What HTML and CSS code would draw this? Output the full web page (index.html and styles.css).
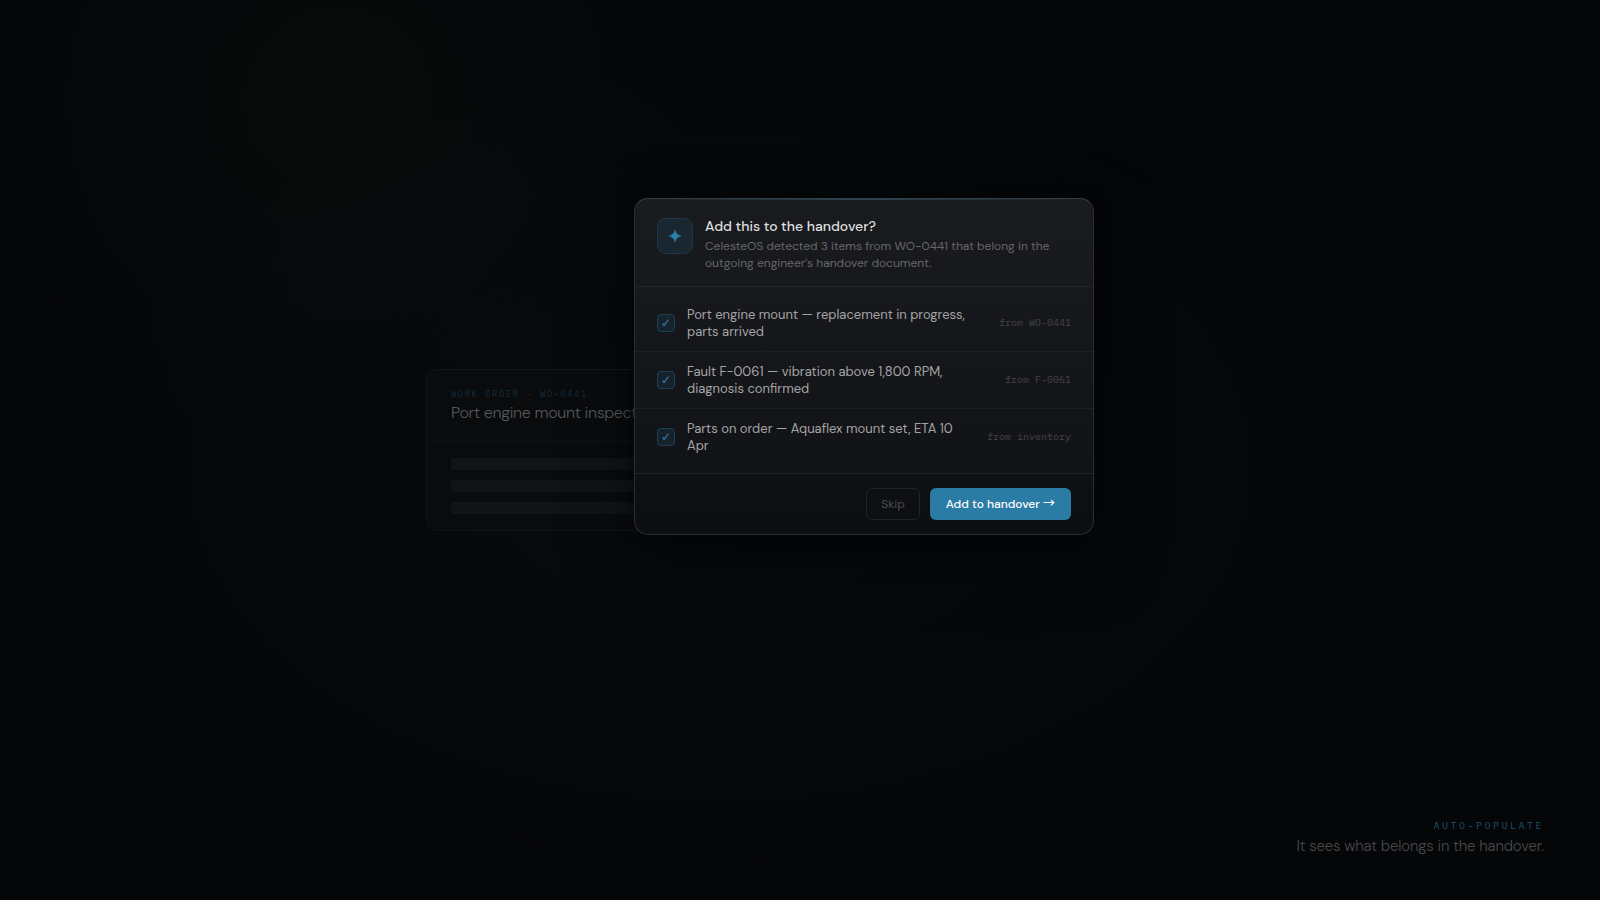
FILE: index.html
```
<!DOCTYPE html>
<html lang="en">
<head>
    <meta charset="UTF-8">
    <meta name="viewport" content="width=device-width, initial-scale=1.0">
    <title>Add to handover</title>
    <link rel="stylesheet" href="styles.css">
</head>
<body>
    <main class="stage">
        <div class="scene">
            <article class="card">
                <header class="card-header">
                    <p class="card-label">WORK ORDER · WO-0441</p>
                    <h1 class="card-title">Port engine mount inspection</h1>
                </header>
                <div class="card-body">
                    <div class="bar"></div>
                    <div class="bar"></div>
                    <div class="bar"></div>
                </div>
            </article>

            <form class="modal" role="dialog" aria-labelledby="modalTitle">
                <header class="modal-header">
                    <span class="modal-icon">
                        <svg width="12" height="12" viewBox="0 0 12 12" aria-hidden="true">
                            <path d="M6 0 Q7 5 12 6 Q7 7 6 12 Q5 7 0 6 Q5 5 6 0 Z" fill="currentColor" stroke="currentColor" stroke-width="0.5"/>
                        </svg>
                    </span>
                    <div>
                        <h2 class="modal-title" id="modalTitle">Add this to the handover?</h2>
                        <p class="modal-text">CelesteOS detected 3 items from WO-0441 that belong in the outgoing engineer's handover document.</p>
                    </div>
                </header>
                <ul class="items">
                    <li class="item">
                        <input type="checkbox" id="item1" checked>
                        <label for="item1">Port engine mount — replacement in progress, parts arrived</label>
                        <span class="source">from WO-0441</span>
                    </li>
                    <li class="item">
                        <input type="checkbox" id="item2" checked>
                        <label for="item2">Fault F-0061 — vibration above 1,800 RPM, diagnosis confirmed</label>
                        <span class="source">from F-0061</span>
                    </li>
                    <li class="item">
                        <input type="checkbox" id="item3" checked>
                        <label for="item3">Parts on order — Aquaflex mount set, ETA 10 Apr</label>
                        <span class="source">from inventory</span>
                    </li>
                </ul>
                <footer class="modal-footer">
                    <button type="button" class="btn">Skip</button>
                    <button type="button" class="btn btn-primary">Add to handover <span class="arrow">→</span></button>
                </footer>
            </form>
        </div>

        <div class="caption">
            <p class="caption-label">AUTO-POPULATE</p>
            <p class="caption-text">It sees what belongs in the handover.</p>
        </div>
    </main>
</body>
</html>
```
FILE: styles.css
```
* {
    box-sizing: border-box;
    margin: 0;
    padding: 0;
}
body {
    font-family: "DM Sans", Inter, sans-serif;
    background-color: #050608;
    background-image:
        radial-gradient(ellipse 360px 360px at 21% 11%, rgba(60, 65, 45, 0.07), transparent),
        radial-gradient(ellipse 640px 400px at 45% 52%, rgba(20, 75, 95, 0.09), transparent);
    color: #fff;
}
.stage {
    position: relative;
    display: flex;
    align-items: center;
    justify-content: center;
    min-height: 100vh;
    padding-right: 80px;
}
.scene {
    position: relative;
    width: 668px;
}

/* work order behind the dialog */
.card {
    background-color: #090b0d;
    border: 1px solid #131619;
    border-radius: 12px;
}
.card-header {
    padding: 18px 24px;
    border-bottom: 1px solid #111416;
}
.card-label {
    margin-bottom: 2px;
    font-family: "IBM Plex Mono", "Liberation Mono", monospace;
    font-size: 9px;
    line-height: 12px;
    letter-spacing: 0.16em;
    color: #142e3e;
}
.card-title {
    font-size: 16px;
    font-weight: 300;
    letter-spacing: -0.02em;
    line-height: 21px;
    color: #57595b;
}
.card-body {
    display: flex;
    flex-direction: column;
    gap: 10px;
    padding: 16px 24px;
}
.bar {
    height: 12px;
    border-radius: 3px;
    background-color: #111416;
}

/* dialog */
.modal {
    position: absolute;
    right: 0;
    bottom: -4px;
    width: 460px;
    background: linear-gradient(#1a1b1f, #121317 80%, #101115);
    border: 1px solid #2d2e31;
    border-top-color: #3a3c3f;
    border-radius: 14px;
    box-shadow: 0 24px 64px rgba(0, 0, 0, 0.5), 0 0 16px rgba(0, 0, 0, 0.4);
    overflow: hidden;
}
.modal::before {
    content: "";
    position: absolute;
    top: 0;
    left: 0;
    right: 0;
    height: 1px;
    background: linear-gradient(90deg, transparent, #22485b, transparent);
}
.modal-header {
    display: flex;
    gap: 12px;
    padding: 19px 22px 14px;
    border-bottom: 1px solid #242529;
}
.modal-icon {
    display: flex;
    flex: none;
    align-items: center;
    justify-content: center;
    width: 36px;
    height: 36px;
    background-color: #1a2730;
    border: 1px solid #1c3a4b;
    border-radius: 9px;
    color: #2e7fa9;
}
.modal-title {
    margin-bottom: 4px;
    font-size: 14px;
    font-weight: 500;
    line-height: 16px;
    color: #dedfdf;
}
.modal-text {
    font-size: 12px;
    line-height: 17px;
    color: #66676a;
}
.items {
    list-style: none;
    padding: 8px 0;
}
.item {
    display: flex;
    align-items: center;
    gap: 12px;
    padding: 11px 22px;
    border-bottom: 1px solid #1e1f23;
}
.item:last-child {
    border-bottom: none;
}
.item input {
    appearance: none;
    flex: none;
    display: grid;
    place-items: center;
    width: 18px;
    height: 18px;
    background-color: #16232c;
    border: 1px solid #1b4157;
    border-radius: 4px;
}
.item input:checked::before {
    content: "✓";
    font-family: "DejaVu Sans", sans-serif;
    font-size: 12px;
    line-height: 16px;
    color: #2e84b0;
}
.item label {
    flex: 1;
    font-size: 13px;
    line-height: 17px;
    color: #a4a5a6;
}
.source {
    margin-left: 12px;
    font-family: "IBM Plex Mono", "Liberation Mono", monospace;
    font-size: 10px;
    line-height: 12px;
    color: #434448;
}
.modal-footer {
    display: flex;
    justify-content: flex-end;
    gap: 10px;
    padding: 14px 22px;
    background-color: rgba(0, 0, 0, 0.15);
    border-top: 1px solid #212226;
}
.btn {
    height: 32px;
    padding: 0 14px;
    background: none;
    border: 1px solid #222327;
    border-radius: 6px;
    font-family: inherit;
    font-size: 12px;
    color: #4c4d50;
}
.btn-primary {
    padding: 0 16px;
    background-color: #2b7ca5;
    border: none;
    font-weight: 500;
    color: #fff;
}
.arrow {
    font-family: "Noto Sans CJK JP", sans-serif;
    line-height: 1;
}

/* caption */
.caption {
    position: absolute;
    right: 56px;
    bottom: 42px;
    text-align: right;
}
.caption-label {
    margin-bottom: 2px;
    font-family: "IBM Plex Mono", "Liberation Mono", monospace;
    font-size: 10px;
    line-height: 12px;
    letter-spacing: 0.25em;
    color: #1d506a;
}
.caption-text {
    font-size: 15px;
    font-weight: 300;
    letter-spacing: -0.01em;
    line-height: 24px;
    color: #48494a;
}
```
